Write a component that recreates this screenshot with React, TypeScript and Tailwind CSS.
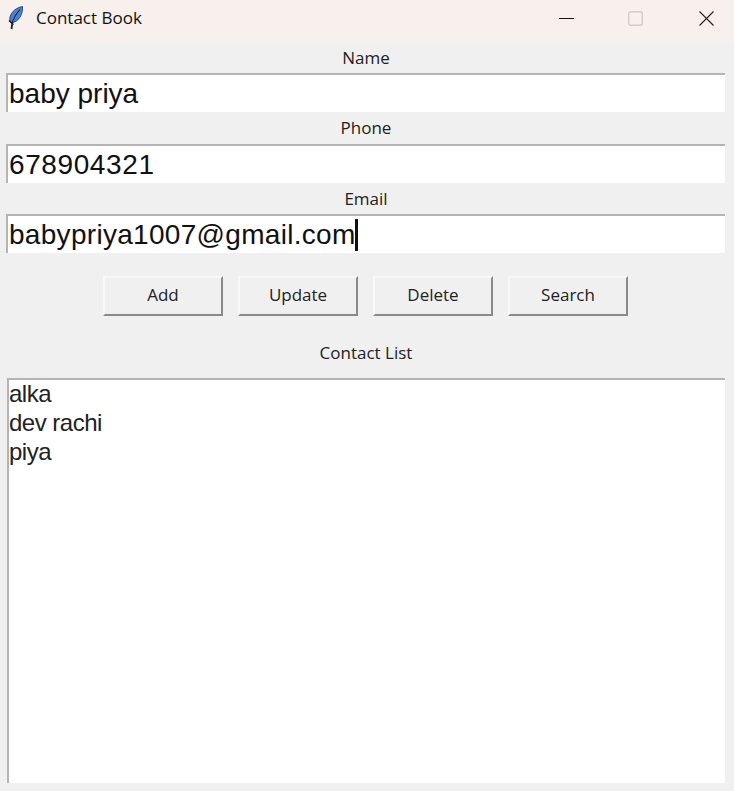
import React from "react";

const uiFont = "font-['Open_Sans',sans-serif]";
const entryFont = "font-['Liberation_Sans',Arial,sans-serif]";

function Feather() {
  return (
    <svg width="16" height="24" viewBox="0 0 16 24" className="shrink-0">
      <path d="M14.5 0.5 C8.5 1.5 3.5 5.5 2 11 C1.5 13.5 1.8 15.5 3 17 C7 16.5 10.5 14 12.5 10.5 C14 7.5 14.8 4 14.5 0.5 Z" fill="#4a82d0" stroke="#2a4168" strokeWidth="0.9" />
      <path d="M12 3.5 C8.5 7.5 5.5 12 4 17.5" fill="none" stroke="#14243f" strokeWidth="1.1" />
      <path d="M3.6 16 L2.6 22.5 L4.4 23.5 L5 18.5 Z" fill="#1c1c24" />
      <path d="M1 14.5 L5.5 18.5" stroke="#1c1c24" strokeWidth="1.4" />
    </svg>
  );
}

function TitleBar() {
  return (
    <div className="flex h-[42px] items-center justify-between bg-[#f7f0ed] pb-[6px]">
      <div className="flex items-center pl-[8px]">
        <Feather />
        <span className={`ml-[12px] text-[17px] text-[#111] ${uiFont}`}>Contact Book</span>
      </div>
      <div className="flex items-center">
        <svg width="15" height="15" viewBox="0 0 15 15" className="mr-[54px]">
          <path d="M0 7.5 H15" stroke="#111" strokeWidth="1" />
        </svg>
        <svg width="15" height="15" viewBox="0 0 15 15" className="mr-[56px]">
          <rect x="0.75" y="0.75" width="13.5" height="13.5" rx="2" fill="none" stroke="#cfcbc9" strokeWidth="1.3" />
        </svg>
        <svg width="15" height="15" viewBox="0 0 15 15" className="mr-[20px]">
          <path d="M0.5 0.5 L14.5 14.5 M14.5 0.5 L0.5 14.5" stroke="#222" strokeWidth="1.1" />
        </svg>
      </div>
    </div>
  );
}

function Field({ label, value, caret, labelH, inner }: { label: string; value: string; caret?: boolean; labelH: string; inner: string }) {
  return (
    <div className="flex flex-col">
      <div className={`flex ${labelH} items-center justify-center pr-[2px] text-[17px] text-[#222] ${uiFont}`}>{label}</div>
      <div className={`ml-[6px] mr-[9px] flex h-[39px] items-center border-t-2 border-l-2 border-t-[#b4b4b4] border-l-[#b4b4b4] bg-white pl-[1px] text-[28px] text-[#111] ${inner} ${entryFont}`}>
        <span>{value}</span>
        {caret && <span className="ml-[-1px] h-[32px] w-[3px] bg-[#111]" />}
      </div>
    </div>
  );
}

function Btn({ children }: { children: string }) {
  return (
    <button className={`h-[40px] w-[120px] border-2 border-t-[#f8f8f8] border-l-[#f8f8f8] border-r-[#8a8a8a] border-b-[#8a8a8a] bg-[#f0f0f0] pb-[2px] text-[17px] text-[#222] ${uiFont}`}>
      {children}
    </button>
  );
}

export default function App() {
  return (
    <div className="flex h-[791px] w-[734px] flex-col overflow-hidden bg-[#f0f0f0]">
      <TitleBar />
      <Field label="Name" value="baby priya" labelH="h-[31px]" inner="pt-[1px]" />
      <Field label="Phone" value="678904321" labelH="h-[32px]" inner="tracking-[0.6px]" />
      <Field label="Email" value="babypriya1007@gmail.com" labelH="h-[31px]" inner="pt-[1px] tracking-[0.3px]" caret />
      <div className="mt-[23px] flex justify-center gap-[15px] pr-[3px]">
        <Btn>Add</Btn>
        <Btn>Update</Btn>
        <Btn>Delete</Btn>
        <Btn>Search</Btn>
      </div>
      <div className={`mt-[23px] flex h-[39px] items-start justify-center pr-[2px] pt-[1px] text-[17px] text-[#222] ${uiFont}`}>Contact List</div>
      <div className={`ml-[7px] mr-[9px] h-[405px] border-t-2 border-l-2 border-t-[#b4b4b4] border-l-[#b4b4b4] bg-white text-[24px] leading-[29px] tracking-[-0.5px] text-[#222] ${entryFont}`}>
        <div className="-mt-[1px]">alka</div>
        <div>dev rachi</div>
        <div>piya</div>
      </div>
    </div>
  );
}
